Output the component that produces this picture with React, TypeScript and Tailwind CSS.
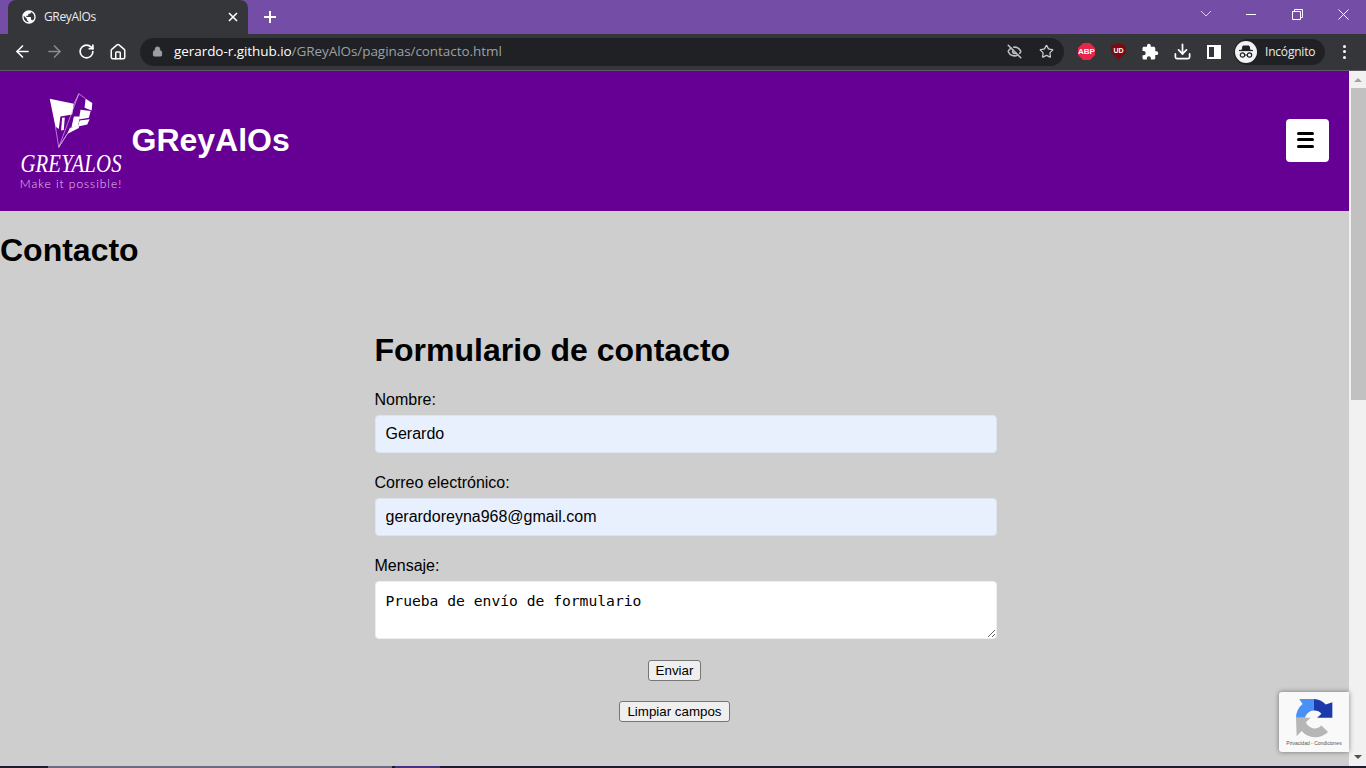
import { ArrowLeft, ArrowRight, Download, EyeOff, House, Lock, RotateCw, Star } from "lucide-react";
import { MdExtension, MdPublic } from "react-icons/md";

const sans = "font-['Liberation_Sans',Arial,sans-serif]";
const ui = "font-['Open_Sans','Noto_Sans',sans-serif]";

function TabBar() {
  return (
    <div className="flex h-[34px] shrink-0 items-end bg-[#744ea6] pl-2 text-white">
      <div className="flex h-[34px] w-[240px] items-center rounded-t-lg bg-[#35363a] pl-[13px] pr-[10px]">
        <MdPublic size={16} className="shrink-0" />
        <span className={`${ui} ml-[7px] flex-1 text-[12px] tracking-[-0.35px] text-[#e8eaed]`}>GReyAlOs</span>
        <svg width="10" height="10" viewBox="0 0 10 10" className="stroke-white" strokeWidth="1.6">
          <path d="M1 1l8 8M9 1l-8 8" />
        </svg>
      </div>
      <svg width="12" height="12" viewBox="0 0 12 12" className="mb-[11px] ml-[16px] stroke-white" strokeWidth="2">
        <path d="M6 0v12M0 6h12" />
      </svg>
      <div className="ml-auto flex h-[27px] items-start text-white">
        <svg width="12" height="8" viewBox="0 0 12 8" fill="none" className="mr-[34px] mt-[3px] stroke-[#d9cdea]">
          <path d="M1 1l5 5 5-5" />
        </svg>
        <svg width="10" height="2" viewBox="0 0 10 2" className="mr-[36px] mt-[7px] fill-white">
          <rect width="10" height="1" />
        </svg>
        <svg width="11" height="11" viewBox="0 0 11 11" fill="none" className="mr-[35px] mt-[2px] stroke-white">
          <path d="M.5 2.5h8v8h-8zM2.5 2.5v-2h8v8h-2" />
        </svg>
        <svg width="11" height="11" viewBox="0 0 11 11" className="mr-[17px] mt-[2px] stroke-white">
          <path d="M.5.5l10 10M10.5.5l-10 10" />
        </svg>
      </div>
    </div>
  );
}

function Toolbar() {
  return (
    <div className="flex h-[37px] shrink-0 items-center border-b border-[#5c5c60] bg-[#35363a] pb-[1px] text-white">
      <ArrowLeft size={19} strokeWidth={2} className="ml-[13px]" />
      <ArrowRight size={19} strokeWidth={2} className="ml-[13px] text-[#8a8b8e]" />
      <RotateCw size={17} strokeWidth={2.4} className="ml-[14px]" />
      <House size={18} strokeWidth={2} className="ml-[14px]" />
      <div className="ml-[13px] flex h-[28px] w-[924px] items-center rounded-full bg-[#202124]">
        <Lock size={11} fill="#9aa0a6" className="ml-[12px] text-[#9aa0a6]" />
        <span className={`${ui} ml-[11px] text-[13.5px] tracking-[-0.06px] text-white`}>
          gerardo-r.github.io<span className="text-[#9aa0a6]">/GReyAlOs/paginas/contacto.html</span>
        </span>
        <EyeOff size={15} strokeWidth={2.5} className="ml-auto text-[#bdc1c6]" />
        <Star size={15} strokeWidth={2} className="ml-[17px] mr-[10px] text-[#c8ccd0]" />
      </div>
      <div className="ml-[14px] flex h-[17px] w-[17px] items-center justify-center bg-[#e8254b] [clip-path:polygon(30%_0,70%_0,100%_30%,100%_70%,70%_100%,30%_100%,0_70%,0_30%)]">
        <span className={`${sans} text-[8px] font-bold text-white`}>ABP</span>
      </div>
      <div className="ml-[16px] flex h-[17px] w-[15px] items-start justify-center bg-[#7c0a10] pt-[3px] [clip-path:polygon(50%_0,100%_15%,100%_55%,50%_100%,0_55%,0_15%)]">
        <span className={`${sans} text-[7px] font-bold text-white`}>UD</span>
      </div>
      <MdExtension size={18} className="ml-[15px]" />
      <Download size={19} strokeWidth={2.2} className="ml-[14px]" />
      <div className="ml-[15px] flex h-[14px] w-[14px] border-2 border-white">
        <div className="ml-auto h-full w-[5px] bg-white" />
      </div>
      <div className="ml-[13px] flex h-[26px] w-[91px] items-center rounded-full bg-[#202124] pl-[1px]">
        <div className="flex h-[22px] w-[22px] items-center justify-center rounded-full bg-[#f1f3f4]">
          <svg width="16" height="14" viewBox="0 0 16 14" fill="none" className="stroke-[#202124]">
            <path d="M4 5l1-4h6l1 4z" fill="#202124" />
            <path d="M1 5.5h14" strokeWidth="1.2" />
            <circle cx="4.5" cy="10" r="2.2" strokeWidth="1.2" />
            <circle cx="11.5" cy="10" r="2.2" strokeWidth="1.2" />
            <path d="M6.7 10h2.6" />
          </svg>
        </div>
        <span className={`${ui} ml-[8px] text-[12px] tracking-[-0.2px] text-[#e8eaed]`}>Incógnito</span>
      </div>
      <div className="ml-[18px] flex flex-col gap-[2.5px]">
        <div className="h-[3px] w-[3px] rounded-full bg-white" />
        <div className="h-[3px] w-[3px] rounded-full bg-white" />
        <div className="h-[3px] w-[3px] rounded-full bg-white" />
      </div>
    </div>
  );
}

function Logo() {
  return (
    <div className="flex w-[102px] flex-col items-center text-white">
      <svg width="47" height="57" viewBox="110 15 140 170" className="mr-[2px]">
        <g fill="#fff">
          <path d="M118 35l72 15-5 32-35 6-5 37-10-7z" />
          <path d="M155 92l8-1-3 37-8 2z" />
          <path d="M190 88h17l-4 30-20 2z" />
          <path d="M225 35l20 13-2 22-21-8z" />
          <path d="M210 68l30 4-5 20-30 5z" />
          <path d="M207 100l30-4-7 16-27 6z" />
          <path d="M178 122l27-8v8l-35 18z" />
        </g>
        <g fill="none" stroke="#d9b8ee" strokeWidth="2">
          <path d="M205 20l-15 30M205 20l20 15M205 20l-60 160M135 118l10 62M170 140l-25 40M183 120l-38 60" />
        </g>
      </svg>
      <span className="mt-[2px] h-[26px] whitespace-nowrap font-['Liberation_Serif',serif] text-[25px] italic leading-[26px] tracking-[0.2px] [transform:scaleX(0.83)]">
        GREYALOS
      </span>
      <span className="h-[14px] whitespace-nowrap font-['Lato',sans-serif] text-[12px] font-light leading-[14px] tracking-[0.95px] text-[#e6cdf2]">
        Make it possible!
      </span>
    </div>
  );
}

function Header() {
  return (
    <header className="flex h-[140px] shrink-0 items-center bg-[#660094] pl-5 pr-5">
      <Logo />
      <h2 className={`${sans} mb-[2px] ml-[9.5px] text-[32px] font-bold leading-[37px] text-white`}>GReyAlOs</h2>
      <button className="mb-[1px] ml-auto flex h-[43px] w-[43px] flex-col items-center justify-center gap-[3.5px] rounded bg-white pb-[2px] pr-[4px]">
        <span className="h-[3px] w-[17px] rounded-full bg-black" />
        <span className="h-[3px] w-[17px] rounded-full bg-black" />
        <span className="h-[3px] w-[17px] rounded-full bg-black" />
      </button>
    </header>
  );
}

function Field({ label, value }: { label: string; value: string }) {
  return (
    <div className="mb-[21px]">
      <label className="block h-[18px] text-[16px] leading-[18px] text-black">{label}</label>
      <input
        readOnly
        value={value}
        className="mt-[6px] block h-[38px] w-[622px] rounded border border-[#dde4f0] bg-[#e8f0fe] px-[10px] text-[16px] text-black outline-none"
      />
    </div>
  );
}

function ContactForm() {
  const button = "rounded-[3px] border border-[#767676] bg-[#efefef] px-[7px] text-[13.33px] leading-[19px] text-black";
  return (
    <form className={`${sans} mx-auto mt-[63px] w-[600px]`}>
      <h2 className="mb-[22px] text-[32px] font-bold leading-[37px] text-black">Formulario de contacto</h2>
      <Field label="Nombre:" value="Gerardo" />
      <Field label="Correo electrónico:" value="gerardoreyna968@gmail.com" />
      <label className="block h-[18px] text-[16px] leading-[18px] text-black">Mensaje:</label>
      <textarea
        readOnly
        value="Prueba de envío de formulario"
        className="mt-[6px] block h-[58px] w-[622px] rounded border border-[#eeeeee] bg-white px-[10px] py-[10px] font-['DejaVu_Sans_Mono',monospace] text-[14.66px] leading-[18px] text-black outline-none"
      />
      <div className="mt-[21px] flex flex-col items-center gap-[20px]">
        <button type="button" className={button}>Enviar</button>
        <button type="button" className={button}>Limpiar campos</button>
      </div>
    </form>
  );
}

function Recaptcha() {
  return (
    <div className="absolute bottom-[14px] right-0 flex h-[60px] w-[70px] flex-col items-center rounded-l-[3px] bg-[#f9f9f9] pt-[5px] shadow-[0_0_5px_rgba(0,0,0,0.45)]">
      <svg width="38" height="42" viewBox="165 110 115 125" className="shrink-0">
        <path d="M222 115h-44l10 15a55 55 0 0 0-20 42h27a28 28 0 0 1 27-22z" fill="#4a90f5" />
        <path d="M222 115a50 50 0 0 1 36 17l20-7v47h-46l13-12a28 28 0 0 0-23-10z" fill="#1c3aa9" />
        <path d="M168 172h44l-14 13a28 28 0 0 0 47 10l20 20a55 55 0 0 1-80-3l-15 16z" fill="#b6b6b6" />
      </svg>
      <span className={`${sans} whitespace-nowrap text-[5px] leading-[8px] text-[#555]`}>Privacidad - Condiciones</span>
    </div>
  );
}

function Scrollbar() {
  return (
    <div className="flex w-[17px] shrink-0 flex-col items-center bg-[#f1f1f1]">
      <div className="mt-[7px] h-0 w-0 border-x-[4px] border-b-[4px] border-x-transparent border-b-[#a3a3a3]" />
      <div className="ml-[2px] mt-[6px] h-[312px] w-[15px] bg-[#c1c1c1]" />
      <div className="mb-[7px] mt-auto h-0 w-0 border-x-[4px] border-t-[4px] border-x-transparent border-t-[#505050]" />
    </div>
  );
}

export default function App() {
  return (
    <div className="flex h-screen w-full flex-col overflow-hidden bg-[#cecece]">
      <TabBar />
      <Toolbar />
      <div className="relative flex min-h-0 flex-1">
        <main className="min-w-0 flex-1 overflow-hidden">
          <Header />
          <h1 className={`${sans} mt-[21px] text-[32px] font-bold leading-[37px] text-black`}>Contacto</h1>
          <ContactForm />
        </main>
        <Scrollbar />
        <div className="absolute bottom-0 right-[17px]">
          <Recaptcha />
        </div>
      </div>
      <div className="flex h-[2px] shrink-0 bg-[#1f1b2e]">
        <div className="ml-[48px] w-[344px] bg-[#6e6a80]" />
        <div className="ml-[3px] w-[45px] bg-[#4b3280]" />
      </div>
    </div>
  );
}
